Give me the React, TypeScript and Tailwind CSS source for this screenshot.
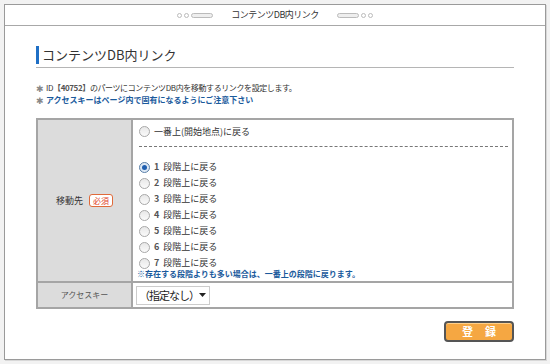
import { useState } from "react";

const levels = [1, 2, 3, 4, 5, 6, 7];

function Radio({ checked, onClick }: { checked: boolean; onClick: () => void }) {
  return (
    <span
      onClick={onClick}
      className={`inline-flex h-[11px] w-[11px] shrink-0 items-center justify-center rounded-full border ${
        checked ? "border-[#5a7fa8] bg-[#dce8f5]" : "border-[#a8a8a8] bg-gradient-to-b from-[#e8e8e8] to-[#fafafa]"
      }`}
    >
      {checked && <span className="h-[5px] w-[5px] rounded-full bg-[#1f5fb0]" />}
    </span>
  );
}

function Star() {
  return <span className="mr-[1px] inline-block w-[9px] shrink-0 text-[9px] leading-none text-[#888]">✱</span>;
}

export default function App() {
  const [level, setLevel] = useState(1);

  return (
    <div
      className="h-[364px] w-[550px] bg-[#f2f2f2] p-[4px] text-[#333]"
      style={{ fontFamily: '"Noto Sans CJK JP", "Noto Sans", sans-serif' }}
    >
      <div className="flex h-[356px] flex-col border border-[#9a9a9a] bg-white shadow-[1px_1px_0_#d8d8d8]">
        {/* title bar */}
        <div className="flex h-[21px] shrink-0 items-center justify-center gap-[18px] border-b border-[#a8a8a8]">
          <div className="flex items-center gap-[2px]">
            <span className="h-[5px] w-[5px] rounded-full border border-[#bbb]" />
            <span className="h-[5px] w-[5px] rounded-full border border-[#bbb]" />
            <span className="h-[5px] w-[22px] rounded-full border border-[#bbb] bg-[#eee]" />
          </div>
          <span className="text-[9px] tracking-[-0.5px] text-[#333]">コンテンツDB内リンク</span>
          <div className="flex items-center gap-[2px]">
            <span className="h-[5px] w-[22px] rounded-full border border-[#bbb] bg-[#eee]" />
            <span className="h-[5px] w-[5px] rounded-full border border-[#bbb]" />
            <span className="h-[5px] w-[5px] rounded-full border border-[#bbb]" />
          </div>
        </div>

        <div className="flex flex-1 flex-col pl-[31px] pr-[31px]">
          {/* heading */}
          <div className="mt-[20px] flex items-center border-b border-[#b5b5b5] pb-[3px]">
            <span className="h-[18px] w-[3px] bg-[#1f6fc5]" />
            <span className="ml-[3px] text-[13px] leading-[18px] text-[#333]">コンテンツDB内リンク</span>
          </div>

          {/* notes */}
          <div className="mt-[14px] flex flex-col text-[8px] leading-[12px]">
            <div className="flex items-center">
              <Star />
              <span className="tracking-[-0.4px]">
                ID<span className="font-bold text-[#555]">【40752】</span>のパーツにコンテンツDB内を移動するリンクを設定します。
              </span>
            </div>
            <div className="flex items-center">
              <Star />
              <span className="font-bold text-[#1a5a9c]">アクセスキーはページ内で固有になるようにご注意下さい</span>
            </div>
          </div>

          {/* form table */}
          <div className="mt-[12px] border-2 border-[#a5a5a5] text-[9px]">
            <div className="flex border-b-2 border-[#a5a5a5]">
              <div className="flex w-[95px] shrink-0 items-center justify-center gap-[6px] border-r-2 border-[#a5a5a5] bg-[#dcdcdc]">
                <span>移動先</span>
                <span className="rounded-[3px] border border-[#e06a3a] bg-white px-[3px] text-[8px] leading-[11px] text-[#e0442a]">必須</span>
              </div>
              <div className="flex flex-1 flex-col pl-[6px] pr-[4px] pt-[4px] pb-[2px]">
                <label className="flex h-[15px] items-center gap-[4px]" onClick={() => setLevel(0)}>
                  <Radio checked={level === 0} onClick={() => setLevel(0)} />
                  <span>一番上(開始地点)に戻る</span>
                </label>
                <div className="mt-[7px] mb-[12px] border-t border-dashed border-[#777]" />
                {levels.map((n) => (
                  <label key={n} className="flex h-[16px] items-center gap-[4px]" onClick={() => setLevel(n)}>
                    <Radio checked={level === n} onClick={() => setLevel(n)} />
                    <span className="font-bold text-[#555]">{n}</span>
                    <span>段階上に戻る</span>
                  </label>
                ))}
                <p className="-mt-[3px] -ml-[2px] text-[8px] font-bold leading-[11px] text-[#1a5a9c]">
                  ※存在する段階よりも多い場合は、一番上の段階に戻ります。
                </p>
              </div>
            </div>
            <div className="flex h-[24px]">
              <div className="flex w-[95px] shrink-0 items-center justify-center border-r-2 border-[#a5a5a5] bg-[#dcdcdc] text-[8px] text-[#555]">
                アクセスキー
              </div>
              <div className="flex flex-1 items-center pl-[3px]">
                <div className="flex h-[19px] w-[74px] items-center justify-between border border-[#ccc] bg-white pl-[2px] pr-[4px]">
                  <span className="whitespace-nowrap text-[11px] leading-none tracking-[-1px] text-[#222]">（指定なし）</span>
                  <svg width="7" height="4" viewBox="0 0 7 4" className="shrink-0">
                    <path d="M0 0h7L3.5 4z" fill="#222" />
                  </svg>
                </div>
              </div>
            </div>
          </div>

          {/* submit */}
          <div className="mt-[12px] flex justify-end">
            <button className="flex h-[21px] w-[70px] items-center justify-center gap-[12px] rounded-[4px] border-2 border-[#555] bg-[#f5a742] text-[11px] font-bold text-white shadow-[inset_0_1px_0_#ffd08a]">
              <span>登</span>
              <span>録</span>
            </button>
          </div>
        </div>
      </div>
    </div>
  );
}
